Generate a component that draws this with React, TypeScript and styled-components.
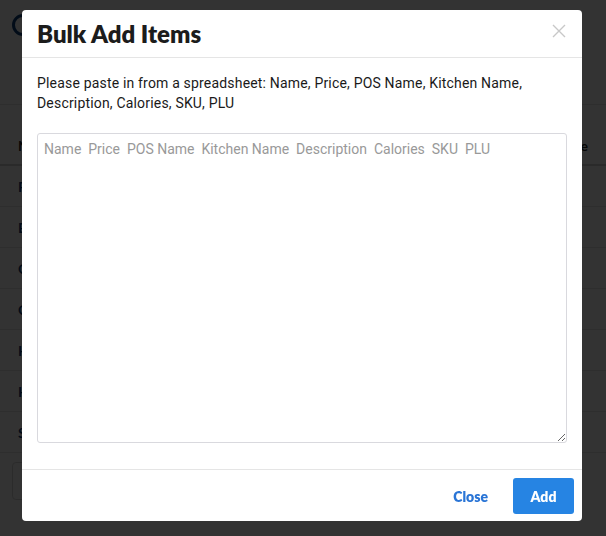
import React from 'react';
import styled, { createGlobalStyle } from 'styled-components';

const GlobalStyle = createGlobalStyle`
  html, body {
    margin: 0;
    padding: 0;
    background: #ffffff;
    font-family: 'Lato', 'Noto Sans', sans-serif;
  }
`;

const Page = styled.div`
  width: 606px;
  height: 536px;
  overflow: hidden;
  background: #ffffff;
`;

const PageHeader = styled.div`
  height: 105px;
  border-bottom: 1px solid #e6e6e6;
  padding: 14px 12px 0;
  box-sizing: border-box;
`;

const LogoCircle = styled.div`
  width: 22px;
  height: 22px;
  border-radius: 50%;
  border: 3px solid #0d3e78;
  box-sizing: border-box;
`;

const Table = styled.div`
  display: flex;
  flex-direction: column;
`;

const HeadRow = styled.div`
  height: 61px;
  display: flex;
  align-items: flex-end;
  justify-content: space-between;
  padding: 0 18px 10px;
  box-sizing: border-box;
  border-bottom: 2px solid #cfcfcf;
  font-weight: 700;
  font-size: 14px;
  color: #222;
`;

const Row = styled.div`
  height: 41px;
  display: flex;
  align-items: center;
  padding: 0 18px;
  box-sizing: border-box;
  border-bottom: 1px solid #e3e3e3;
  color: #0d3e78;
  font-size: 14px;
  font-weight: 700;
`;

const SearchBox = styled.div`
  margin: 9px 12px;
  height: 36px;
  width: 200px;
  border: 1px solid #d8d8d8;
  border-radius: 4px;
`;

const Backdrop = styled.div`
  position: fixed;
  inset: 0;
  background: rgba(0, 0, 0, 0.8);
  display: flex;
  justify-content: flex-start;
  align-items: flex-start;
`;

const Dialog = styled.div`
  margin: 10px 0 0 22px;
  width: 560px;
  background: #ffffff;
  border-radius: 4px;
  display: flex;
  flex-direction: column;
`;

const DialogHeader = styled.div`
  height: 48px;
  padding: 0 15px;
  box-sizing: border-box;
  border-bottom: 1px solid #e5e5e5;
  display: flex;
  align-items: center;
  justify-content: space-between;
`;

const Title = styled.h4`
  margin: 0;
  font-family: 'Lato', sans-serif;
  font-weight: 800;
  font-size: 24px;
  color: #1c1c1c;
  line-height: 1;
  padding-top: 1px;
`;

const CloseX = styled.button`
  border: 0;
  background: transparent;
  padding: 0;
  margin-right: 1px;
  margin-top: -6px;
  width: 14px;
  height: 14px;
  display: flex;
  cursor: pointer;
`;

const DialogBody = styled.div`
  padding: 15px 15px 26px;
`;

const Intro = styled.p`
  margin: 0 0 20px;
  font-family: 'Roboto', sans-serif;
  font-size: 14px;
  letter-spacing: 0.18px;
  line-height: 20px;
  color: #1a1a1a;
`;

const Paste = styled.textarea`
  display: block;
  width: 100%;
  height: 310px;
  box-sizing: border-box;
  border: 1px solid #d9d9de;
  border-radius: 3px;
  padding: 6px 6px;
  font-family: 'Roboto', sans-serif;
  font-size: 14px;
  line-height: 18px;
  color: #333;
  outline: none;
  white-space: pre;

  &::placeholder {
    color: #999999;
  }
`;

const DialogFooter = styled.div`
  border-top: 1px solid #e5e5e5;
  padding: 8px 8px 7px;
  display: flex;
  justify-content: flex-end;
  align-items: center;
  gap: 10px;
`;

const FooterButton = styled.button<{ $primary?: boolean }>`
  height: 36px;
  padding: 0 15px;
  border: 0;
  border-radius: 3px;
  font-family: 'Lato', sans-serif;
  font-weight: 800;
  font-size: 14px;
  cursor: pointer;
  background: ${(p) => (p.$primary ? '#2684e3' : 'transparent')};
  color: ${(p) => (p.$primary ? '#ffffff' : '#2a75d6')};
  min-width: ${(p) => (p.$primary ? '61px' : 'auto')};
`;

const rows = ['P', 'B', 'C', 'C', 'H', 'H', 'S'];

export default function App() {
  return (
    <Page>
      <GlobalStyle />
      <PageHeader>
        <LogoCircle />
      </PageHeader>
      <Table>
        <HeadRow>
          <span>N</span>
          <span>e</span>
        </HeadRow>
        {rows.map((r, i) => (
          <Row key={i}>{r}</Row>
        ))}
      </Table>
      <SearchBox />
      <Backdrop>
        <Dialog>
          <DialogHeader>
            <Title>Bulk Add Items</Title>
            <CloseX aria-label="Close">
              <svg width="14" height="14" viewBox="0 0 14 14">
                <path d="M1 1L13 13M13 1L1 13" stroke="#c8c8c8" strokeWidth="1.4" />
              </svg>
            </CloseX>
          </DialogHeader>
          <DialogBody>
            <Intro>
              Please paste in from a spreadsheet: Name, Price, POS Name, Kitchen Name,
              Description, Calories, SKU, PLU
            </Intro>
            <Paste placeholder="Name  Price  POS Name  Kitchen Name  Description  Calories  SKU  PLU" />
          </DialogBody>
          <DialogFooter>
            <FooterButton>Close</FooterButton>
            <FooterButton $primary>Add</FooterButton>
          </DialogFooter>
        </Dialog>
      </Backdrop>
    </Page>
  );
}
